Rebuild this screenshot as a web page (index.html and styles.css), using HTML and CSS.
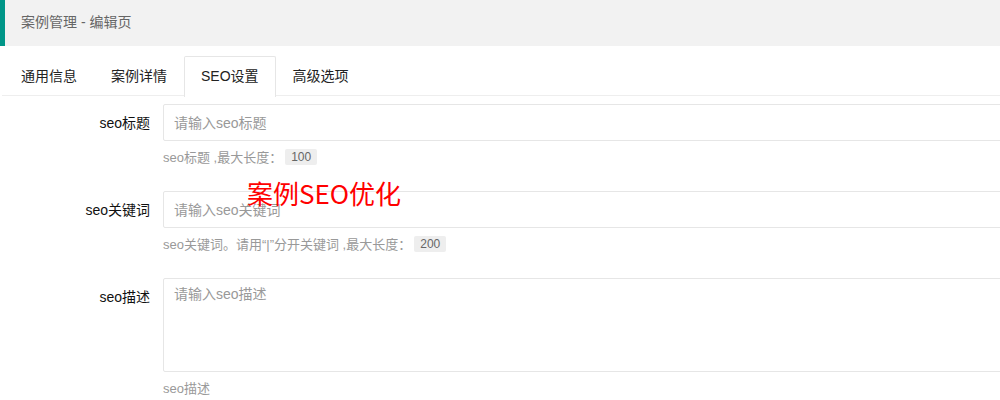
FILE: index.html
```html
<!DOCTYPE html>
<html lang="zh-CN">
<head>
  <meta charset="UTF-8">
  <title>案例管理 - 编辑页</title>
  <link rel="stylesheet" href="styles.css">
</head>
<body>

  <div class="cabecalho">案例管理 - 编辑页</div>

  <div class="abas">
    <ul class="abas-titulo">
      <li>通用信息</li>
      <li>案例详情</li>
      <li class="ativa">SEO设置</li>
      <li>高级选项</li>
    </ul>

    <form class="formulario">
      <div class="linha">
        <label class="rotulo">seo标题</label>
        <div class="campo">
          <input type="text" class="entrada" placeholder="请输入seo标题">
          <div class="ajuda">seo标题 ,最大长度：<span class="selo">100</span></div>
        </div>
      </div>

      <div class="linha">
        <label class="rotulo">seo关键词</label>
        <div class="campo">
          <input type="text" class="entrada" placeholder="请输入seo关键词">
          <div class="ajuda">seo关键词。请用“|”分开关键词 ,最大长度：<span class="selo">200</span></div>
        </div>
      </div>

      <div class="linha">
        <label class="rotulo">seo描述</label>
        <div class="campo">
          <textarea class="area" placeholder="请输入seo描述"></textarea>
          <div class="ajuda">seo描述</div>
        </div>
      </div>

      <div class="marca">案例SEO优化</div>
    </form>
  </div>

</body>
</html>
```

FILE: styles.css
```css
html, body {
  overflow: hidden;
}

body {
  margin: 0;
  font-family: "Liberation Sans", Arial, "Noto Sans CJK SC", sans-serif;
  font-size: 14px;
  color: #333;
  background: #fff;
}

.cabecalho {
  height: 46px;
  line-height: 44px;
  padding-left: 16px;
  border-left: 5px solid #009688;
  background: #f2f2f2;
  color: #666;
}

.abas {
  margin: 10px 0 0 2px;
}

.abas-titulo {
  display: flex;
  margin: 0;
  padding: 0 0 0 2px;
  list-style: none;
  height: 39px;
  border-bottom: 1px solid #eee;
}

.abas-titulo li {
  height: 39px;
  line-height: 39px;
  padding: 0 16px;
  color: #222;
  border: 1px solid transparent;
  border-bottom: none;
}

.abas-titulo li.ativa {
  background: #fff;
  border-color: #e6e6e6;
  height: 40px;
  border-radius: 2px 2px 0 0;
}

.formulario {
  position: relative;
  padding-top: 8px;
}

.linha {
  display: flex;
  margin-bottom: 23px;
}

.rotulo {
  width: 148px;
  padding: 9px 0;
  line-height: 20px;
  text-align: right;
  color: #111;
  flex-shrink: 0;
}

.campo {
  margin-left: 13px;
  width: 900px;
  flex-shrink: 0;
}

.entrada,
.area {
  display: block;
  width: 100%;
  box-sizing: border-box;
  border: 1px solid #e6e6e6;
  border-radius: 2px;
  font-family: inherit;
  font-size: 14px;
  color: #333;
  background: #fff;
  outline: none;
}

.entrada {
  height: 37px;
  padding: 0 10px;
}

.area {
  height: 94px;
  padding: 5px 10px;
  line-height: 20px;
  resize: none;
}

.entrada::placeholder,
.area::placeholder {
  color: #999;
}

.ajuda {
  margin-top: 7px;
  line-height: 20px;
  font-size: 13px;
  color: #999;
}

.selo {
  display: inline-block;
  margin-left: 3px;
  padding: 0 6px;
  height: 16px;
  line-height: 16px;
  font-size: 12px;
  color: #666;
  background: #eee;
  border-radius: 2px;
  vertical-align: 1px;
}

.marca {
  position: absolute;
  left: 245px;
  top: 80px;
  font-size: 26px;
  line-height: 34px;
  color: #f00;
  font-family: "Noto Sans CJK SC", sans-serif;
}
```
